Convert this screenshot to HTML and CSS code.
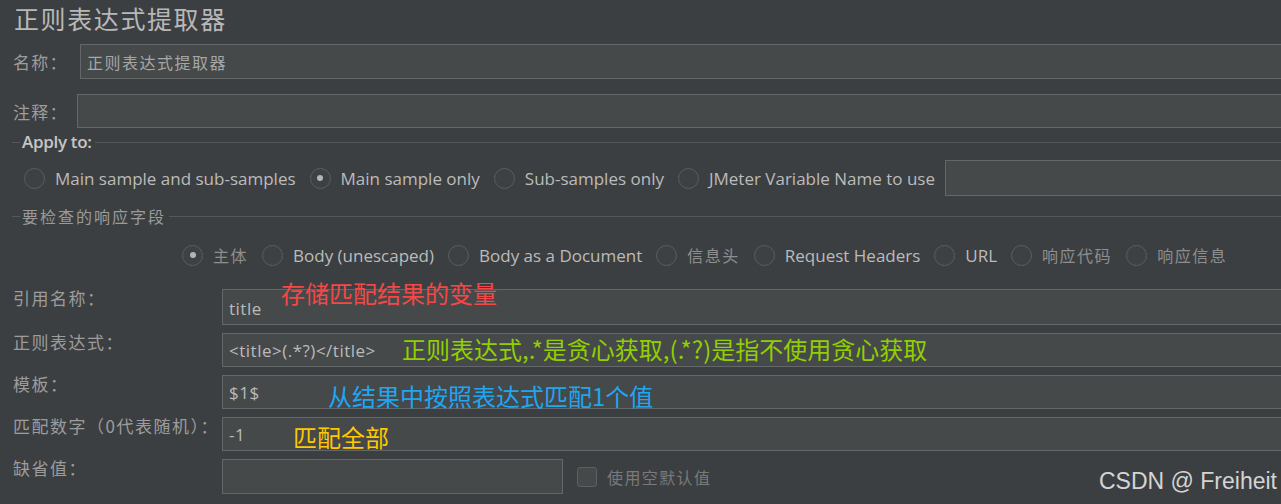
FILE: index.html
```html
<!DOCTYPE html>
<html lang="zh">
<head>
<meta charset="utf-8">
<title>正则表达式提取器</title>
<link rel="stylesheet" href="styles.css">
</head>
<body>
<div class="page">
  <h1 class="title">正则表达式提取器</h1>

  <div class="top-row name-row">
    <label class="lbl cjk">名称：</label>
    <div class="field"><span class="cjk-val">正则表达式提取器</span></div>
  </div>

  <div class="top-row comment-row">
    <label class="lbl cjk">注释：</label>
    <div class="field"></div>
  </div>

  <div class="legend legend-apply"><span>Apply to:</span></div>
  <div class="radios apply">
    <span class="opt"><i class="radio"></i>Main sample and sub-samples</span>
    <span class="opt"><i class="radio on"></i>Main sample only</span>
    <span class="opt"><i class="radio"></i>Sub-samples only</span>
    <span class="opt"><i class="radio"></i>JMeter Variable Name to use</span>
    <div class="field var-field"></div>
  </div>

  <div class="legend legend-resp"><span class="cjk">要检查的响应字段</span></div>
  <div class="radios resp">
    <span class="opt cjk-opt"><i class="radio on"></i>主体</span>
    <span class="opt"><i class="radio"></i>Body (unescaped)</span>
    <span class="opt"><i class="radio"></i>Body as a Document</span>
    <span class="opt cjk-opt"><i class="radio"></i>信息头</span>
    <span class="opt"><i class="radio"></i>Request Headers</span>
    <span class="opt"><i class="radio"></i>URL</span>
    <span class="opt cjk-opt"><i class="radio"></i>响应代码</span>
    <span class="opt cjk-opt"><i class="radio"></i>响应信息</span>
  </div>

  <div class="form">
    <div class="frow">
      <label class="flbl">引用名称：</label>
      <div class="field tall">title</div>
    </div>
    <div class="frow">
      <label class="flbl">正则表达式：</label>
      <div class="field">&lt;title&gt;(.*?)&lt;/title&gt;</div>
    </div>
    <div class="frow">
      <label class="flbl">模板：</label>
      <div class="field">$1$</div>
    </div>
    <div class="frow">
      <label class="flbl">匹配数字（0代表随机）：</label>
      <div class="field">-1</div>
    </div>
    <div class="frow">
      <label class="flbl">缺省值：</label>
      <div class="defgroup">
        <div class="field def-field"></div>
        <span class="check"><i class="box"></i>使用空默认值</span>
      </div>
    </div>

    <span class="note red">存储匹配结果的变量</span>
    <span class="note green">正则表达式,.*是贪心获取,(.*?)是指不使用贪心获取</span>
    <span class="note blue">从结果中按照表达式匹配1个值</span>
    <span class="note yellow">匹配全部</span>
  </div>

  <div class="watermark">CSDN @ Freiheit</div>
</div>
</body>
</html>
```

FILE: styles.css
```css
html, body {
  margin: 0;
  padding: 0;
  overflow: hidden;
  background: #3c3f41;
}

.page {
  position: relative;
  width: 1281px;
  height: 504px;
  overflow: hidden;
  font-family: "Open Sans", "Noto Sans CJK SC", sans-serif;
  color: #bbbbbb;
}

.title {
  margin: 0;
  padding-left: 14px;
  height: 36px;
  font-family: "Noto Sans CJK SC", sans-serif;
  font-size: 25px;
  font-weight: 400;
  line-height: 36px;
  letter-spacing: 1.6px;
  color: #b8b8b8;
}

.field {
  box-sizing: border-box;
  height: 34px;
  flex: 1;
  background: #45494a;
  border: 1px solid #646767;
  display: flex;
  align-items: center;
  padding-left: 6px;
  font-size: 17px;
  letter-spacing: 0.5px;
  color: #bbbbbb;
  white-space: nowrap;
}

.top-row {
  display: flex;
  align-items: center;
  padding-left: 13px;
  margin-right: -6px;
}

.cjk {
  font-family: "Noto Sans CJK SC", sans-serif;
}

.lbl {
  font-size: 17px;
  letter-spacing: 1.2px;
  color: #9c9c9c;
}

.name-row { margin-top: 8px; }
.name-row .lbl { width: 67px; }
.name-row .field { height: 35px; }

.comment-row { margin-top: 15px; }
.comment-row .lbl { width: 64px; }

.cjk-val {
  font-family: "Noto Sans CJK SC", sans-serif;
  font-size: 16px;
  letter-spacing: 1.5px;
  color: #a6a6a6;
}

.legend {
  display: flex;
  align-items: center;
  height: 20px;
  margin-left: 12px;
  font-size: 17px;
}
.legend::before {
  content: "";
  width: 8px;
  height: 1px;
  background: #55585a;
}
.legend::after {
  content: "";
  flex: 1;
  height: 1px;
  background: #55585a;
}
.legend span {
  padding: 0 3px 0 2px;
  line-height: 20px;
}
.legend-apply { margin-top: 4px; }
.legend-apply span { color: #c6c6c6; font-weight: 600; letter-spacing: -0.3px; }
.legend-resp { margin-top: 10px; }
.legend-resp span { color: #9a9a9a; letter-spacing: 2px; font-size: 16px; }

.radios {
  display: flex;
  align-items: center;
  font-size: 17px;
  white-space: nowrap;
}
.radios.apply {
  height: 36px;
  margin-top: 8px;
  padding-left: 24px;
  margin-right: -6px;
}
.radios.resp {
  height: 24px;
  margin-top: 17px;
  padding-left: 182px;
}

.opt {
  display: inline-flex;
  align-items: center;
  gap: 10px;
  margin-right: 14px;
  color: #bbbbbb;
  letter-spacing: 0;
}
.cjk-opt {
  font-family: "Noto Sans CJK SC", sans-serif;
  font-size: 16px;
  color: #8e8e8e;
  letter-spacing: 1.5px;
}

.radio {
  box-sizing: border-box;
  width: 21px;
  height: 21px;
  border-radius: 50%;
  border: 1.5px solid #5b5e60;
  background: #3e4143;
  display: inline-flex;
  align-items: center;
  justify-content: center;
}
.radio.on::after {
  content: "";
  width: 6px;
  height: 6px;
  border-radius: 50%;
  background: #b4b4b4;
}

.var-field {
  height: 36px;
  margin-left: -4px;
}

.form {
  position: relative;
  margin-top: 22px;
  padding-left: 13px;
  margin-right: -6px;
}

.frow {
  display: flex;
  align-items: flex-start;
  margin-top: 8px;
}
.frow:first-child { margin-top: 0; }

.flbl {
  width: 209px;
  line-height: 18px;
  font-family: "Noto Sans CJK SC", sans-serif;
  font-size: 17px;
  letter-spacing: 1.5px;
  color: #9c9c9c;
}

.field.tall { height: 36px; padding-top: 3px; }

.defgroup {
  display: flex;
  align-items: center;
  flex: 1;
}
.def-field {
  flex: none;
  width: 341px;
  height: 35px;
}

.check {
  display: inline-flex;
  align-items: center;
  gap: 10px;
  margin-left: 14px;
  font-family: "Noto Sans CJK SC", sans-serif;
  font-size: 16px;
  letter-spacing: 1.4px;
  color: #7a7a7a;
}
.box {
  box-sizing: border-box;
  width: 20px;
  height: 20px;
  border-radius: 3px;
  border: 1.5px solid #5d6061;
  background: #45494a;
}

.note {
  position: absolute;
  font-family: "Noto Sans CJK SC", sans-serif;
  font-size: 24px;
  line-height: 24px;
  white-space: nowrap;
}
.red { left: 281px; top: -8px; color: #f24848; }
.green { left: 402px; top: 48px; color: #92cf00; }
.blue { left: 328px; top: 95px; color: #1ea6f2; }
.yellow { left: 293px; top: 136px; color: #ffc800; }

.watermark {
  position: absolute;
  right: 4px;
  top: 467px;
  font-family: "Liberation Sans", sans-serif;
  font-size: 23px;
  line-height: 28px;
  color: #d4d4d4;
}
```
